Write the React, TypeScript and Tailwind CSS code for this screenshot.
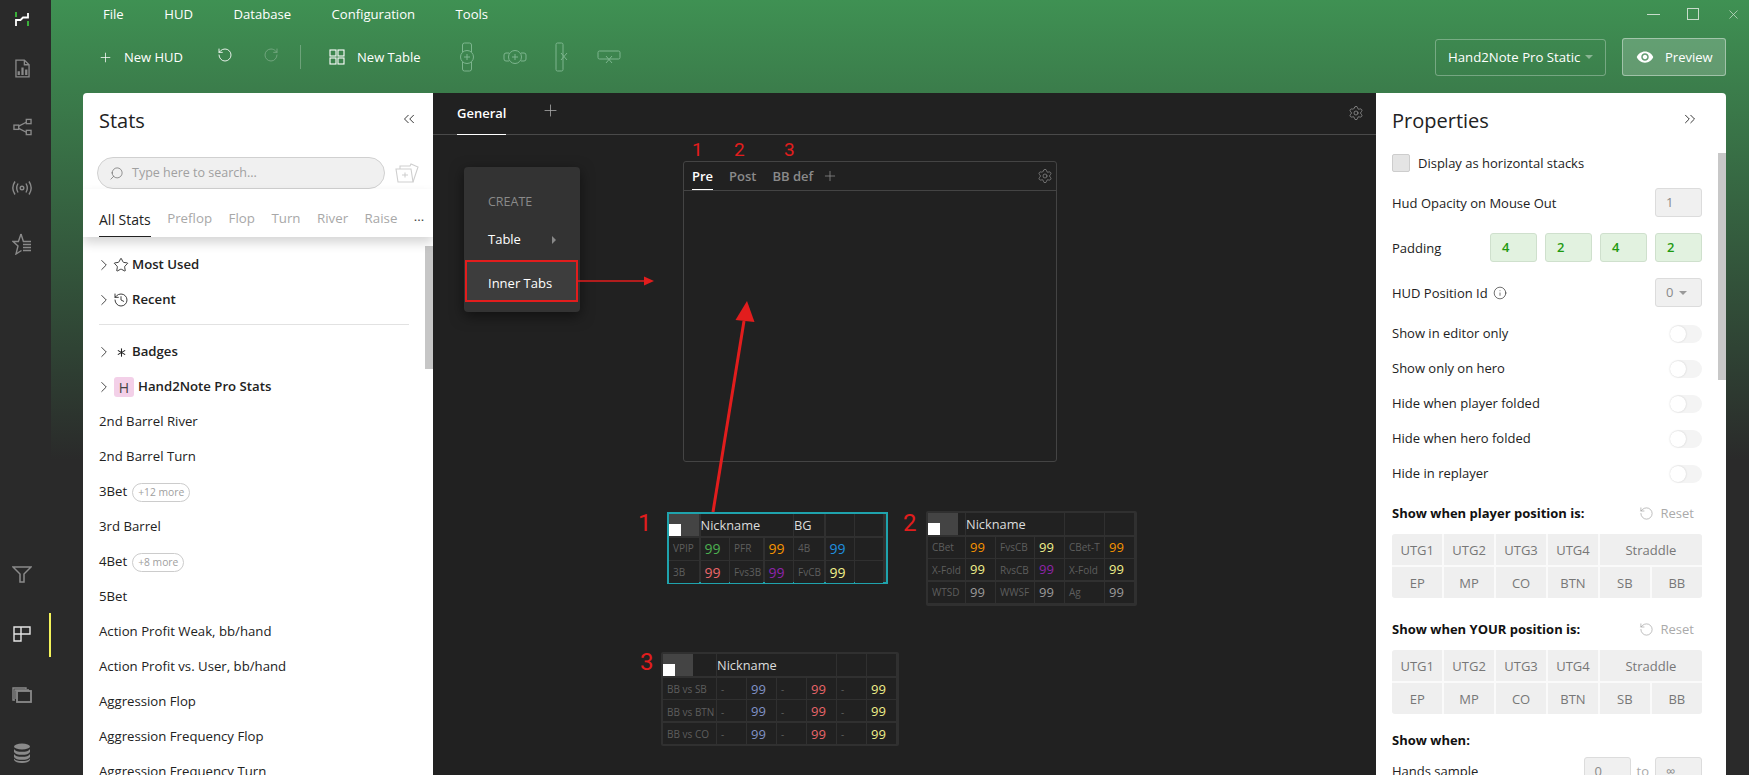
import { ChevronRight, ChevronsLeft, ChevronsRight, History, Info, Plus, RotateCcw, RotateCw, Search, Settings, Star, X, Asterisk } from "lucide-react";
import { MdVisibility } from "react-icons/md";

const menus = ["File", "HUD", "Database", "Configuration", "Tools"];
const stats = ["2nd Barrel River", "2nd Barrel Turn", "3Bet", "3rd Barrel", "4Bet", "5Bet", "Action Profit Weak, bb/hand", "Action Profit vs. User, bb/hand", "Aggression Flop", "Aggression Frequency Flop", "Aggression Frequency Turn"];
const more: Record<string, string> = { "3Bet": "+12 more", "4Bet": "+8 more" };
const toggles = ["Show in editor only", "Show only on hero", "Hide when player folded", "Hide when hero folded", "Hide in replayer"];

function RailIcons() {
  return (
    <div className="relative flex h-full w-[51px] shrink-0 flex-col items-center bg-[#2a2a2a] pr-[7px]">
      <svg width="14" height="15" viewBox="0 0 14 15" className="mt-[12px]" fill="none">
        <path d="M1 0v5M13 9v5" stroke="#3fd23f" strokeWidth="1.6" />
        <path d="M13 1v4.500H8L5.500 8H1v6" stroke="#fff" strokeWidth="1.8" />
      </svg>
      <svg width="15" height="19" viewBox="0 0 16 20" className="mt-[32px]" fill="none" stroke="#8a8a8a" strokeWidth="1.4">
        <path d="M1 1h9l5 5v13H1z" />
        <path d="M10 1v5h5" />
        <path d="M4 17v-4M8 17V9M12 17v-6" strokeWidth="2.4" />
      </svg>
      <svg width="19" height="18" viewBox="0 0 20 18" className="mt-[40px]" fill="none" stroke="#8a8a8a" strokeWidth="1.4">
        <rect x="1" y="7" width="5" height="4.500" />
        <rect x="14" y="1" width="5" height="4.500" />
        <rect x="14" y="12.500" width="5" height="4.500" />
        <path d="M6 8l8-4M6 10.500l8 4" />
      </svg>
      <svg width="20" height="14" viewBox="0 0 20 14" className="mt-[45px]" fill="none" stroke="#8a8a8a" strokeWidth="1.4">
        <circle cx="10" cy="7" r="1.800" />
        <path d="M6 2.500Q3.400 7 6 11.500M14 2.500q2.600 4.500 0 9M3 .5q-4.400 6.500 0 13M17 .5q4.400 6.500 0 13" />
      </svg>
      <svg width="20" height="22" viewBox="0 0 20 22" className="mt-[38px]" fill="none" stroke="#8a8a8a" strokeWidth="1.4">
        <path d="M9 1l-2.600 7.500H1l5 4.500L4 21l5.500-3.500M9 1l2.400 7.500H19" />
        <path d="M11 11.500h8M11 14.500h8M11 17.500h8" />
      </svg>
      <div className="flex-1" />
      <svg width="20" height="17" viewBox="0 0 20 17" fill="none" stroke="#8a8a8a" strokeWidth="1.5" className="mb-[43px]">
        <path d="M1 1h18l-7 7v8H8V8z" />
      </svg>
      <svg width="18" height="16" viewBox="0 0 18 16" fill="none" stroke="#e4e4e4" strokeWidth="1.4" className="mb-[45px]">
        <path d="M1 1h7v7H1zM8 1h9v7H8M1 8h7v7H1z" />
      </svg>
      <svg width="20" height="16" viewBox="0 0 20 16" fill="none" stroke="#8a8a8a" strokeWidth="1.4" className="mb-[40px]">
        <rect x="5" y="4" width="14" height="11" strokeWidth="1.800" />
        <path d="M3 13H1V1h13v1M3 12V3h14" />
      </svg>
      <svg width="18" height="20" viewBox="0 0 18 20" className="mb-[12px]" fill="#8a8a8a">
        <ellipse cx="9" cy="3.500" rx="8" ry="3" />
        <path d="M1 6c1 2 4 2.800 8 2.800S16 8 17 6v3c-1 2-4 2.800-8 2.800S2 11 1 9zM1 11c1 2 4 2.800 8 2.800s7-.8 8-2.800v3c-1 2-4 2.800-8 2.800S2 16 1 14zM1 15.500c1 2 4 2.500 8 2.500s7-.5 8-2.500v1.500c-1 2-4 3-8 3s-7-1-8-3z" />
      </svg>
      <div className="absolute left-[49px] top-[613px] h-[44px] w-[2px] bg-[#f3f35a]" />
    </div>
  );
}

function ToolbarGlyphs() {
  return (
    <div className="ml-[35px] flex items-center gap-[25px] opacity-40">
      <svg width="22" height="32" viewBox="0 0 22 32" fill="none" stroke="#dfe" strokeWidth="1">
        <circle cx="11" cy="16" r="6.500" />
        <path d="M11 13v6M8 16h6M6.500 11V4a2 2 0 0 1 2-2h5a2 2 0 0 1 2 2v7M6.500 21v7a2 2 0 0 0 2 2h5a2 2 0 0 0 2-2v-7" />
      </svg>
      <svg width="24" height="18" viewBox="0 0 24 18" fill="none" stroke="#dfe" strokeWidth="1">
        <circle cx="12" cy="9" r="6.500" />
        <path d="M12 6v6M9 9h6M6 5H3a2 2 0 0 0-2 2v4a2 2 0 0 0 2 2h3M18 5h3a2 2 0 0 1 2 2v4a2 2 0 0 1-2 2h-3" />
      </svg>
      <svg width="14" height="32" viewBox="0 0 14 32" fill="none" stroke="#dfe" strokeWidth="1" className="ml-[3px]">
        <rect x="1" y="2" width="7" height="28" rx="1.500" />
        <path d="M6 12l6 7M12 12l-6 7" />
      </svg>
      <svg width="24" height="14" viewBox="0 0 24 14" fill="none" stroke="#dfe" strokeWidth="1" className="ml-[3px]">
        <rect x="1" y="1" width="22" height="8" rx="1.500" />
        <path d="M9 6l6 7M15 6l-6 7" />
      </svg>
    </div>
  );
}

function Header() {
  return (
    <div className="h-[93px] shrink-0 text-[13px] text-white">
      <div className="flex h-[28px] items-center">
        <div className="ml-[52px] flex gap-[40.500px] pt-[1px] text-[13.100px]">
          {menus.map((m) => (
            <span key={m}>{m}</span>
          ))}
        </div>
        <div className="ml-auto flex items-center gap-[27px] pr-[8px] text-[#c8dccb]">
          <div className="h-px w-[13px] bg-[#c8dccb]" />
          <div className="h-[12px] w-[12px] border-[1.5px] border-[#c8dccb]" />
          <X size={15} strokeWidth={1.2} />
        </div>
      </div>
      <div className="mt-[10px] flex h-[38px] items-center pl-[47px] pr-[23px]">
        <Plus size={15} strokeWidth={1.2} />
        <span className="ml-[11px] pt-[2px]">New HUD</span>
        <RotateCcw size={16} strokeWidth={1.3} className="ml-[34px] -mt-1" />
        <RotateCw size={16} strokeWidth={1.3} className="ml-[30px] -mt-1 opacity-30" />
        <div className="ml-[21px] h-[24px] w-px bg-white/25" />
        <svg width="16" height="16" viewBox="0 0 16 16" fill="none" stroke="#fff" strokeWidth="1.1" className="ml-[28px]">
          <rect x="1" y="1" width="6" height="6" />
          <rect x="9" y="1" width="6" height="6" />
          <rect x="1" y="9" width="6" height="6" />
          <rect x="9" y="9" width="6" height="6" />
        </svg>
        <span className="ml-[12px] pt-[2px]">New Table</span>
        <ToolbarGlyphs />
        <div className="ml-auto flex h-[37px] w-[171px] items-center rounded-[3px] border border-white/30 pl-[12px]">
          <span className="whitespace-nowrap pt-[2px] text-[13.200px]">Hand2Note Pro Static</span>
          <span className="ml-[5px] h-0 w-0 border-x-[4px] border-t-[4px] border-x-transparent border-t-white/40" />
        </div>
        <div className="ml-[16px] flex h-[38px] w-[104px] items-center rounded-[3px] border border-white/40 bg-white/20 pl-[13px]">
          <MdVisibility size={18} />
          <span className="ml-[11px] pt-[2px]">Preview</span>
        </div>
      </div>
    </div>
  );
}

function StatsPanel() {
  return (
    <div className="relative flex h-full w-[350px] shrink-0 flex-col overflow-hidden rounded-tl-[4px] bg-white text-[13.200px] text-[#222]">
      <div className="flex h-[56px] shrink-0 items-center justify-between pl-[16px] pr-[15px]">
        <span className="text-[20px] text-[#222]">Stats</span>
        <ChevronsLeft size={18} strokeWidth={1.2} className="-mt-1" />
      </div>
      <div className="mt-[8px] flex shrink-0 items-center pl-[14px]">
        <div className="flex h-[32px] w-[288px] items-center rounded-full border border-[#d0d0d0] bg-[#f0f0f0] pl-[11px] text-[#a0a0a0]">
          <Search size={15} strokeWidth={1.1} className="-scale-x-100 text-[#666]" />
          <span className="ml-[8px] text-[12.5px]">Type here to search...</span>
        </div>
        <svg width="24" height="20" viewBox="0 0 24 20" fill="none" stroke="#cfcfcf" strokeWidth="1.1" className="ml-[10px]">
          <path d="M1 6h15l2 13H3z" />
          <path d="M5 6V3h10l1-2 7 3-5 15M7 12h6M10 9.500v5" />
        </svg>
      </div>
      <div className="relative z-10 flex h-[48px] shrink-0 items-center gap-[16.500px] pl-[16px] pt-[12px] text-[13.300px] text-[#a8a8a8] shadow-[0_6px_10px_rgba(0,0,0,0.16)]">
        <span className="relative flex h-full items-center text-[14px] font-medium text-[#222]">
          All Stats
          <span className="absolute inset-x-0 bottom-0 h-[1.5px] bg-[#222]" />
        </span>
        <span>Preflop</span>
        <span>Flop</span>
        <span>Turn</span>
        <span>River</span>
        <span>Raise</span>
        <span className="-mt-1 text-[#444]">...</span>
      </div>
      <div className="relative flex-1 pl-[16px] pr-[24px] pt-[10px]">
        <div className="absolute right-0 top-[9px] h-[123px] w-[8px] bg-[#c6c6c6]" />
        <GroupRow icon={<Star size={16} strokeWidth={1.3} />} label="Most Used" />
        <GroupRow icon={<History size={16} strokeWidth={1.3} />} label="Recent" />
        <div className="mt-[7px] h-px bg-[#e2e2e2]" />
        <div className="mt-[9.500px]" />
        <GroupRow icon={<Asterisk size={15} strokeWidth={1.7} />} label="Badges" />
        <div className="flex h-[35px] items-center font-semibold">
          <ChevronRight size={18} strokeWidth={1.1} className="-ml-[4px]" />
          <span className="ml-px flex h-[20px] w-[20px] items-center justify-center rounded-[3px] bg-[#f3d0e8] text-[14px] font-medium text-[#444]">H</span>
          <span className="ml-[4px]">Hand2Note Pro Stats</span>
        </div>
        {stats.map((s) => (
          <div key={s} className="flex h-[35px] items-center whitespace-nowrap">
            {s}
            {more[s] ? (
              <span className="ml-[5px] rounded-full border border-[#ccc] px-[5px] text-[10.300px] leading-[17px] text-[#a0a0a0]">{more[s]}</span>
            ) : null}
          </div>
        ))}
      </div>
    </div>
  );
}

function GroupRow({ icon, label }: { icon: React.ReactNode; label: string }) {
  return (
    <div className="flex h-[35px] items-center font-semibold">
      <ChevronRight size={18} strokeWidth={1.1} className="-ml-[4px]" />
      <span className="flex w-[16px] justify-center">{icon}</span>
      <span className="ml-[3px]">{label}</span>
    </div>
  );
}

type Cell = { t?: string; c?: string; avatar?: "a" | "b" };

function HudCell({ cell, numberSize = "text-[14px]", shift = "" }: { cell: Cell; numberSize?: string; shift?: string }) {
  if (cell.avatar) {
    return (
      <div className="relative bg-[#212121]">
        <div className={`h-full bg-[#444] ${cell.avatar === "a" ? "w-full" : "w-[30px]"}`} />
        <div className="absolute bottom-0 left-0 h-[12px] w-[12px] bg-white" />
      </div>
    );
  }
  const number = cell.t === "99";
  return (
    <div className={`flex items-center overflow-hidden whitespace-nowrap bg-[#212121] pl-[4px] ${shift} ${cell.c ?? "text-[#5e5e5e]"} ${number ? numberSize : "text-[10px]"}`}>
      {cell.t}
    </div>
  );
}

function Nick({ t, span }: { t: string; span: string }) {
  return <div className={`flex items-center bg-[#212121] pt-[2px] text-[12.800px] text-[#dcdcdc] ${span}`}>{t}</div>;
}

const green = "text-[#4cb050]";
const orange = "text-[#f59300]";
const blue = "text-[#1e90e0]";
const red = "text-[#e9666a]";
const purple = "text-[#8e24aa]";
const yellow = "text-[#f0f08a]";
const gray = "text-[#9a9a9a]";
const steel = "text-[#8093c8]";

function TableOne() {
  const rows: Cell[] = [
    { t: "VPIP" }, { t: "99", c: green }, { t: "PFR" }, { t: "99", c: orange }, { t: "4B" }, { t: "99", c: blue }, {},
    { t: "3B" }, { t: "99", c: red }, { t: "Fvs3B" }, { t: "99", c: purple }, { t: "FvCB" }, { t: "99", c: yellow }, {},
  ];
  return (
    <div className="absolute left-[234px] top-[377px] h-[72px] w-[221px] border-2 border-[#1fa3ad]">
      <div className="grid h-full grid-cols-[30px_28px_33px_28px_30px_28px_28px] grid-rows-[22px_22px_22px] gap-[1.5px] bg-[#303030]">
        <HudCell cell={{ avatar: "a" }} />
        <Nick t="Nickname" span="col-span-3" />
        <Nick t="BG" span="" />
        <div className="bg-[#212121]" />
        <div className="bg-[#212121]" />
        {rows.map((cell, i) => (
          <HudCell key={i} cell={cell} />
        ))}
      </div>
    </div>
  );
}

function TableTwo() {
  const rows: Cell[] = [
    { t: "CBet" }, { t: "99", c: orange }, { t: "FvsCB" }, { t: "99", c: yellow }, { t: "CBet-T" }, { t: "99", c: orange },
    { t: "X-Fold" }, { t: "99", c: yellow }, { t: "RvsCB" }, { t: "99", c: purple }, { t: "X-Fold" }, { t: "99", c: yellow },
    { t: "WTSD" }, { t: "99", c: gray }, { t: "WWSF" }, { t: "99", c: gray }, { t: "Ag" }, { t: "99", c: gray },
  ];
  return (
    <div className="absolute left-[493px] top-[376px] h-[95px] w-[211px] rounded-[2px] border-[2.5px] border-[#303030]">
      <div className="grid h-full grid-cols-[36.500px_28.500px_37.500px_28.500px_38.500px_28.500px] grid-rows-[22px_21px_21px_21px] gap-[1.5px] bg-[#303030]">
        <HudCell cell={{ avatar: "b" }} />
        <Nick t="Nickname" span="col-span-3" />
        <div className="bg-[#212121]" />
        <div className="bg-[#212121]" />
        {rows.map((cell, i) => (
          <HudCell key={i} cell={cell} numberSize="text-[13px]" shift="pt-[1px]" />
        ))}
      </div>
    </div>
  );
}

function TableThree() {
  const rows: Cell[] = ["BB vs SB", "BB vs BTN", "BB vs CO"].flatMap((label) => [
    { t: label }, { t: "-" }, { t: "99", c: steel }, { t: "-" }, { t: "99", c: red }, { t: "-" }, { t: "99", c: yellow },
  ]);
  return (
    <div className="absolute left-[228px] top-[517px] h-[94px] w-[238px] rounded-[2px] border-[2.5px] border-[#303030]">
      <div className="grid h-full grid-cols-[52.500px_28.500px_28.500px_28.500px_28.500px_28.500px_28.500px] grid-rows-[22px_21px_21px_21px] gap-[1.5px] bg-[#303030]">
        <HudCell cell={{ avatar: "b" }} />
        <Nick t="Nickname" span="col-span-4" />
        <div className="bg-[#212121]" />
        <div className="bg-[#212121]" />
        {rows.map((cell, i) => (
          <HudCell key={i} cell={cell} numberSize="text-[13px]" shift="pt-[3px]" />
        ))}
      </div>
    </div>
  );
}

function Canvas() {
  return (
    <div className="flex h-full min-w-0 flex-1 flex-col bg-[#212121] text-[13px] text-white">
      <div className="flex h-[42px] shrink-0 items-center border-b border-[#4a4a4a] pl-[24px] pr-[12px]">
        <span className="relative flex h-full items-center pt-[1px] font-semibold">
          General
          <span className="absolute inset-x-0 -bottom-px h-[1.5px] bg-white" />
        </span>
        <Plus size={19} strokeWidth={1} className="-mt-[6px] ml-[35px] text-[#aaa]" />
        <Settings size={16} strokeWidth={1.1} className="-mt-[2px] ml-auto text-[#999]" />
      </div>
      <div className="relative flex-1 overflow-hidden">
        <div className="absolute left-[31px] top-[32px] h-[145px] w-[116px] rounded-[4px] bg-[#333] pt-[26px] shadow-[0_4px_14px_rgba(0,0,0,0.5)]">
          <div className="flex h-[18px] items-center pl-[24px] text-[12.5px] text-[#8a8a8a]">CREATE</div>
          <div className="mt-[15px] flex h-[28px] items-center pl-[24px] pr-[24px]">
            Table
            <span className="ml-auto h-0 w-0 border-y-[4px] border-l-[4px] border-y-transparent border-l-[#888]" />
          </div>
          <div className="ml-px mt-[6px] flex h-[42px] w-[113px] items-center border-2 border-[#e21d1d] bg-[#3d3d3d] pl-[21px] pt-[5px]">Inner Tabs</div>
        </div>

        <div className="absolute left-[250px] top-[26px] flex h-[301px] w-[374px] flex-col rounded-[3px] border border-[#444]">
          <div className="flex h-[29px] shrink-0 items-center gap-[16px] border-b border-[#444] pl-[8px] pr-[3px] font-semibold text-[#8a8a8a]">
            <span className="relative flex h-full items-center pt-[1px] text-white">
              Pre
              <span className="absolute inset-x-0 bottom-0 h-[1.5px] bg-white" />
            </span>
            <span className="pt-[1px]">Post</span>
            <span className="pt-[1px]">BB def</span>
            <Plus size={16} strokeWidth={1.2} className="-ml-[7px]" />
            <Settings size={16} strokeWidth={1.1} className="ml-auto" />
          </div>
        </div>

        <span className="absolute left-[259px] top-[2px] font-['Roboto',sans-serif] text-[19px] leading-[26px] text-[#e21d1d]">1</span>
        <span className="absolute left-[301px] top-[2px] font-['Roboto',sans-serif] text-[19px] leading-[26px] text-[#e21d1d]">2</span>
        <span className="absolute left-[351px] top-[2px] font-['Roboto',sans-serif] text-[19px] leading-[26px] text-[#e21d1d]">3</span>

        <TableOne />
        <TableTwo />
        <TableThree />

        <span className="absolute left-[205px] top-[374px] font-['Roboto',sans-serif] text-[24px] leading-[28px] text-[#e21d1d]">1</span>
        <span className="absolute left-[470px] top-[374px] font-['Roboto',sans-serif] text-[24px] leading-[28px] text-[#e21d1d]">2</span>
        <span className="absolute left-[207px] top-[513px] font-['Roboto',sans-serif] text-[24px] leading-[28px] text-[#e21d1d]">3</span>

        <svg className="pointer-events-none absolute inset-0 h-full w-full" fill="#e21d1d" stroke="none">
          <path d="M145 146h67" stroke="#e21d1d" strokeWidth="1.6" />
          <path d="M211 141.500L221 146l-10 4.500z" />
          <path d="M280 377L311 186" stroke="#e21d1d" strokeWidth="3" />
          <path d="M314 166l-11.500 19 19 2z" />
        </svg>
      </div>
    </div>
  );
}

function Toggle({ label }: { label: string }) {
  return (
    <div className="flex h-[35px] items-center justify-between">
      {label}
      <div className="h-[18px] w-[32px] rounded-full bg-[#f4f4f4]">
        <div className="h-[16px] w-[16px] translate-y-px rounded-full bg-white shadow-[0_0_2px_rgba(0,0,0,0.18)]" />
      </div>
    </div>
  );
}

function Field({ value, className, caret }: { value: string; className?: string; caret?: boolean }) {
  return (
    <div className={`flex h-[29px] w-[47px] items-center rounded-[3px] border border-[#dcdcdc] bg-[#f0f0f0] pl-[10px] text-[#8a8a8a] ${className ?? ""}`}>
      {value}
      {caret ? <span className="ml-[6px] h-0 w-0 border-x-[4px] border-t-[4px] border-x-transparent border-t-[#999]" /> : null}
    </div>
  );
}

function PadField({ value }: { value: string }) {
  return (
    <div className="flex h-[29px] w-[47px] items-center rounded-[3px] border border-[#cfe0cd] bg-[#e2f2e0] pl-[11px] font-semibold text-[#1f9a10]">{value}</div>
  );
}

function PositionHeading({ title }: { title: string }) {
  return (
    <div className="flex h-[20px] items-center pr-[8px] pt-[1px]">
      <span className="font-bold text-[#111]">{title}</span>
      <RotateCcw size={15} strokeWidth={1} className="ml-auto text-[#999]" />
      <span className="ml-[7px] text-[#aaa]">Reset</span>
    </div>
  );
}

function PositionGrid() {
  const top = ["UTG1", "UTG2", "UTG3", "UTG4"];
  const bottom = ["EP", "MP", "CO", "BTN", "SB", "BB"];
  return (
    <div className="mt-[11px] grid h-[64px] grid-cols-6 grid-rows-2 gap-[1.5px] overflow-hidden rounded-[3px] bg-[#fafafa] text-center leading-[33px] text-[#777]">
      {top.map((p) => (
        <div key={p} className="bg-[#efefef]">{p}</div>
      ))}
      <div className="col-span-2 bg-[#efefef]">Straddle</div>
      {bottom.map((p) => (
        <div key={p} className="bg-[#efefef]">{p}</div>
      ))}
    </div>
  );
}

function PropertiesPanel() {
  return (
    <div className="relative h-full w-[350px] shrink-0 overflow-hidden rounded-tr-[4px] bg-white pl-[16px] pr-[24px] text-[13px] text-[#222]">
      <div className="absolute right-0 top-[60px] h-[227px] w-[8px] bg-[#c8c8c8]" />
      <div className="flex h-[56px] items-center justify-between pr-[3px]">
        <span className="text-[20px]">Properties</span>
        <ChevronsRight size={18} strokeWidth={1.2} className="-mt-1" />
      </div>
      <div className="flex h-[28px] items-center">
        <div className="h-[18px] w-[18px] rounded-[2px] border border-[#cdcdcd] bg-[#e4e4e4]" />
        <span className="ml-[8px] pt-[1px]">Display as horizontal stacks</span>
      </div>
      <div className="mt-[11px] flex items-center justify-between">
        <span className="pt-[2px]">Hud Opacity on Mouse Out</span>
        <Field value="1" />
      </div>
      <div className="mt-[16px] flex items-center">
        <span className="pt-[2px]">Padding</span>
        <div className="ml-auto flex gap-[8px]">
          <PadField value="4" />
          <PadField value="2" />
          <PadField value="4" />
          <PadField value="2" />
        </div>
      </div>
      <div className="mt-[16px] flex items-center">
        <span className="pt-[2px]">HUD Position Id</span>
        <Info size={14} strokeWidth={1.1} className="ml-[5px]" />
        <Field value="0" caret className="ml-auto" />
      </div>
      <div className="mt-[9px]">
        {toggles.map((t) => (
          <Toggle key={t} label={t} />
        ))}
      </div>
      <div className="mt-[12px]">
        <PositionHeading title="Show when player position is:" />
        <PositionGrid />
      </div>
      <div className="mt-[21px]">
        <PositionHeading title="Show when YOUR position is:" />
        <PositionGrid />
      </div>
      <div className="mt-[16px] h-[20px] font-bold leading-[20px] text-[#111]">Show when:</div>
      <div className="mt-[7px] flex items-center">
        Hands sample
        <Field value="0" className="ml-auto" />
        <span className="mx-[6px] text-[#aaa]">to</span>
        <Field value="∞" />
      </div>
    </div>
  );
}

export default function App() {
  return (
    <div className="flex h-[775px] w-[1749px] overflow-hidden bg-[#2a2a2a] font-['Open_Sans',sans-serif]">
      <RailIcons />
      <div className="flex min-w-0 flex-1 flex-col bg-[linear-gradient(180deg,#3f9153_0px,#2a2a2a_460px)]">
        <Header />
        <div className="flex min-h-0 flex-1 pl-[32px] pr-[23px]">
          <StatsPanel />
          <Canvas />
          <PropertiesPanel />
        </div>
      </div>
    </div>
  );
}
